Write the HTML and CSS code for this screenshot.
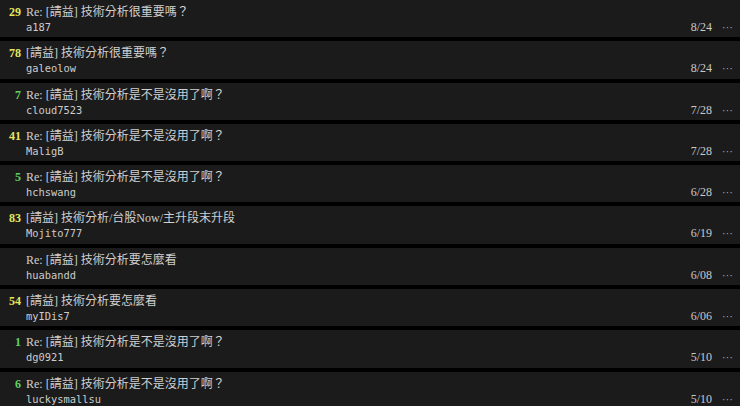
FILE: index.html
```html
<!DOCTYPE html>
<html lang="zh-Hant">
<head>
    <meta charset="UTF-8">
    <meta name="viewport" content="width=device-width, initial-scale=1.0">
    <title>Stock 看板 - 技術分析</title>
    <link rel="stylesheet" href="styles.css">
</head>
<body>
    <!-- 文章列表 -->
    <div class="r-list">
        <div class="r-ent">
            <div class="nrec"><span class="hl f3">29</span></div>
            <div class="r-body">
                <div class="title">Re: [請益] 技術分析很重要嗎？</div>
                <div class="meta"><span class="author">a187</span><span class="date">8/24</span><span class="more">⋯</span></div>
            </div>
        </div>
        <div class="r-ent">
            <div class="nrec"><span class="hl f3">78</span></div>
            <div class="r-body">
                <div class="title">[請益] 技術分析很重要嗎？</div>
                <div class="meta"><span class="author">galeolow</span><span class="date">8/24</span><span class="more">⋯</span></div>
            </div>
        </div>
        <div class="r-ent">
            <div class="nrec"><span class="hl f2">7</span></div>
            <div class="r-body">
                <div class="title">Re: [請益] 技術分析是不是沒用了啊？</div>
                <div class="meta"><span class="author">cloud7523</span><span class="date">7/28</span><span class="more">⋯</span></div>
            </div>
        </div>
        <div class="r-ent">
            <div class="nrec"><span class="hl f3">41</span></div>
            <div class="r-body">
                <div class="title">Re: [請益] 技術分析是不是沒用了啊？</div>
                <div class="meta"><span class="author">MaligB</span><span class="date">7/28</span><span class="more">⋯</span></div>
            </div>
        </div>
        <div class="r-ent">
            <div class="nrec"><span class="hl f2">5</span></div>
            <div class="r-body">
                <div class="title">Re: [請益] 技術分析是不是沒用了啊？</div>
                <div class="meta"><span class="author">hchswang</span><span class="date">6/28</span><span class="more">⋯</span></div>
            </div>
        </div>
        <div class="r-ent">
            <div class="nrec"><span class="hl f3">83</span></div>
            <div class="r-body">
                <div class="title">[請益] 技術分析/台股Now/主升段末升段</div>
                <div class="meta"><span class="author">Mojito777</span><span class="date">6/19</span><span class="more">⋯</span></div>
            </div>
        </div>
        <div class="r-ent">
            <div class="nrec"></div>
            <div class="r-body">
                <div class="title">Re: [請益] 技術分析要怎麼看</div>
                <div class="meta"><span class="author">huabandd</span><span class="date">6/08</span><span class="more">⋯</span></div>
            </div>
        </div>
        <div class="r-ent">
            <div class="nrec"><span class="hl f3">54</span></div>
            <div class="r-body">
                <div class="title">[請益] 技術分析要怎麼看</div>
                <div class="meta"><span class="author">myIDis7</span><span class="date">6/06</span><span class="more">⋯</span></div>
            </div>
        </div>
        <div class="r-ent">
            <div class="nrec"><span class="hl f2">1</span></div>
            <div class="r-body">
                <div class="title">Re: [請益] 技術分析是不是沒用了啊？</div>
                <div class="meta"><span class="author">dg0921</span><span class="date">5/10</span><span class="more">⋯</span></div>
            </div>
        </div>
        <div class="r-ent">
            <div class="nrec"><span class="hl f2">6</span></div>
            <div class="r-body">
                <div class="title">Re: [請益] 技術分析是不是沒用了啊？</div>
                <div class="meta"><span class="author">luckysmallsu</span><span class="date">5/10</span><span class="more">⋯</span></div>
            </div>
        </div>
    </div>
</body>
</html>
```

FILE: styles.css
```css
body, html {
    margin: 0;
    padding: 0;
    background-color: #000;
    color: #ccc;
    font-family: "Liberation Serif", "Noto Sans CJK TC", serif;
}

/* 文章列表 */
.r-list {
    display: flex;
    flex-direction: column;
    gap: 4px;
}

.r-ent {
    display: flex;
    height: 37.3px;
    padding: 4px 7px 0 0;
    box-sizing: border-box;
    background-color: #1b1b1b;
}

.nrec {
    width: 21px;
    margin-right: 5px;
    text-align: right;
    font-size: 12px;
    line-height: 16px;
    font-weight: bold;
}

.hl.f3 {
    color: #e6e65e;
}

.hl.f2 {
    color: #62cf62;
}

.r-body {
    flex: 1;
    display: flex;
    flex-direction: column;
}

.title {
    font-size: 12px;
    line-height: 16px;
    color: #d0d0d0;
    white-space: nowrap;
}

.meta {
    display: flex;
    align-items: baseline;
    line-height: 14px;
}

.author {
    flex: 1;
    font-family: "DejaVu Sans Mono", monospace;
    font-size: 10.4px;
    color: #ccc;
}

.date {
    font-size: 12px;
    color: #c8c8c8;
}

.more {
    margin-left: 10px;
    font-family: "DejaVu Sans", sans-serif;
    font-size: 11px;
    color: #999;
}
```
